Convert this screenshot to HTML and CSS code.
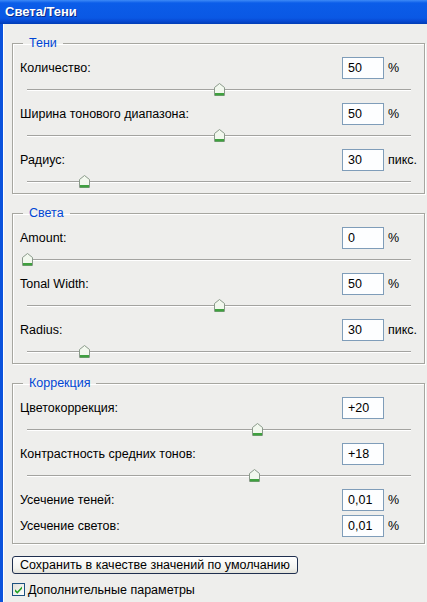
FILE: index.html
```html
<!DOCTYPE html>
<html lang="ru">
<head>
<meta charset="utf-8">
<title>Света/Тени</title>
<link rel="stylesheet" href="styles.css">
</head>
<body>
<div class="window">
  <div class="titlebar">Света/Тени</div>
  <div class="client">
    <fieldset class="group">
      <legend>Тени</legend>
      <div class="row"><span class="label">Количество:</span><span class="field">50</span><span class="unit">%</span></div>
      <div class="slider"><div class="track"></div><svg class="thumb" style="left:50%" width="11" height="13" viewBox="0 0 11 13"><path d="M0.5 4.5 L5.5 0.5 L10.5 4.5 V12.5 H0.5 Z" fill="#f2f8ee" stroke="#8a9a8a"/><rect x="1" y="10" width="9" height="2.5" fill="#3fa03f"/></svg></div>
      <div class="row"><span class="label">Ширина тонового диапазона:</span><span class="field">50</span><span class="unit">%</span></div>
      <div class="slider"><div class="track"></div><svg class="thumb" style="left:50%" width="11" height="13" viewBox="0 0 11 13"><path d="M0.5 4.5 L5.5 0.5 L10.5 4.5 V12.5 H0.5 Z" fill="#f2f8ee" stroke="#8a9a8a"/><rect x="1" y="10" width="9" height="2.5" fill="#3fa03f"/></svg></div>
      <div class="row"><span class="label">Радиус:</span><span class="field">30</span><span class="unit">пикс.</span></div>
      <div class="slider"><div class="track"></div><svg class="thumb" style="left:14.8%" width="11" height="13" viewBox="0 0 11 13"><path d="M0.5 4.5 L5.5 0.5 L10.5 4.5 V12.5 H0.5 Z" fill="#f2f8ee" stroke="#8a9a8a"/><rect x="1" y="10" width="9" height="2.5" fill="#3fa03f"/></svg></div>
    </fieldset>

    <fieldset class="group">
      <legend>Света</legend>
      <div class="row"><span class="label">Amount:</span><span class="field">0</span><span class="unit">%</span></div>
      <div class="slider"><div class="track"></div><svg class="thumb" style="left:0%" width="11" height="13" viewBox="0 0 11 13"><path d="M0.5 4.5 L5.5 0.5 L10.5 4.5 V12.5 H0.5 Z" fill="#f2f8ee" stroke="#8a9a8a"/><rect x="1" y="10" width="9" height="2.5" fill="#3fa03f"/></svg></div>
      <div class="row"><span class="label">Tonal Width:</span><span class="field">50</span><span class="unit">%</span></div>
      <div class="slider"><div class="track"></div><svg class="thumb" style="left:50%" width="11" height="13" viewBox="0 0 11 13"><path d="M0.5 4.5 L5.5 0.5 L10.5 4.5 V12.5 H0.5 Z" fill="#f2f8ee" stroke="#8a9a8a"/><rect x="1" y="10" width="9" height="2.5" fill="#3fa03f"/></svg></div>
      <div class="row"><span class="label">Radius:</span><span class="field">30</span><span class="unit">пикс.</span></div>
      <div class="slider"><div class="track"></div><svg class="thumb" style="left:14.8%" width="11" height="13" viewBox="0 0 11 13"><path d="M0.5 4.5 L5.5 0.5 L10.5 4.5 V12.5 H0.5 Z" fill="#f2f8ee" stroke="#8a9a8a"/><rect x="1" y="10" width="9" height="2.5" fill="#3fa03f"/></svg></div>
    </fieldset>

    <fieldset class="group">
      <legend>Коррекция</legend>
      <div class="row"><span class="label">Цветокоррекция:</span><span class="field">+20</span><span class="unit"></span></div>
      <div class="slider"><div class="track"></div><svg class="thumb" style="left:60%" width="11" height="13" viewBox="0 0 11 13"><path d="M0.5 4.5 L5.5 0.5 L10.5 4.5 V12.5 H0.5 Z" fill="#f2f8ee" stroke="#8a9a8a"/><rect x="1" y="10" width="9" height="2.5" fill="#3fa03f"/></svg></div>
      <div class="row"><span class="label">Контрастность средних тонов:</span><span class="field">+18</span><span class="unit"></span></div>
      <div class="slider"><div class="track"></div><svg class="thumb" style="left:59%" width="11" height="13" viewBox="0 0 11 13"><path d="M0.5 4.5 L5.5 0.5 L10.5 4.5 V12.5 H0.5 Z" fill="#f2f8ee" stroke="#8a9a8a"/><rect x="1" y="10" width="9" height="2.5" fill="#3fa03f"/></svg></div>
      <div class="row"><span class="label">Усечение теней:</span><span class="field">0,01</span><span class="unit">%</span></div>
      <div class="row row-tight"><span class="label">Усечение светов:</span><span class="field">0,01</span><span class="unit">%</span></div>
    </fieldset>

    <div class="button">Сохранить в качестве значений по умолчанию</div>
    <div class="check-row">
      <span class="checkbox"><svg width="11" height="11" viewBox="0 0 11 11"><path d="M2 5.2 L4.3 7.6 L9 2.6 L9 4.8 L4.3 9.8 L2 7.4 Z" fill="#21a121"/></svg></span>
      <span class="check-label">Дополнительные параметры</span>
    </div>
  </div>
</div>
</body>
</html>
```

FILE: styles.css
```css
html, body {
  margin: 0;
  padding: 0;
}
body {
  width: 427px;
  height: 602px;
  overflow: hidden;
  background: #eeeeec;
  font-family: "Liberation Sans", Arial, sans-serif;
  font-size: 12.5px;
  color: #000;
}
.window {
  height: 602px;
  display: flex;
  flex-direction: column;
}
.titlebar {
  height: 24px;
  line-height: 24px;
  padding-left: 5px;
  color: #fff;
  font-weight: bold;
  font-size: 13px;
  text-shadow: 1px 1px 0 #0a2a8a;
  background: linear-gradient(to bottom, #3d8af7 0px, #0b5de9 3px, #0a58e4 18px, #0749d3 21px, #003cb5 24px);
}
.client {
  flex: 1;
  border-left: 3px solid #0b52dc;
  padding: 11px 0 0 9px;
  box-shadow: inset 1px 0 0 #ffffff;
}
.group {
  margin: 0 2px 11px 0;
  padding: 0 0 0 7px;
  border: 1px solid #a6a6a0;
  box-shadow: 1px 1px 0 #fff, inset 1px 1px 0 #fff;
  min-inline-size: 0;
}
.group:last-of-type {
  padding-bottom: 6px;
}
.group legend {
  margin-left: 3px;
  padding: 0 6px;
  line-height: 16px;
  height: 16px;
  color: #0046d5;
}
.group legend + .row {
  margin-top: 6px;
}
.row {
  display: flex;
  align-items: center;
  height: 22px;
  margin-top: 2px;
}
.row-tight {
  margin-top: 4px;
}
.label {
  flex: 1;
}
.field {
  box-sizing: border-box;
  width: 42px;
  height: 22px;
  line-height: 20px;
  padding-left: 5px;
  border: 1px solid #7f9db9;
  background: #fdfeff;
}
.unit {
  width: 36px;
  margin-left: 4px;
}
.slider {
  position: relative;
  height: 22px;
  margin: 0 13px 0 7px;
}
.track {
  position: relative;
  top: 10px;
  height: 1px;
  background: #a3a3a0;
  border-bottom: 1px solid #fff;
}
.thumb {
  position: absolute;
  top: 4px;
  margin-left: -5px;
}
.button {
  box-sizing: border-box;
  width: 286px;
  height: 18px;
  line-height: 16px;
  margin-top: 12px;
  padding-left: 7px;
  border: 1px solid #1f2f4f;
  border-radius: 3px;
  background: linear-gradient(to bottom, #ffffff, #f3f3ef 70%, #e2e2da);
  white-space: nowrap;
}
.check-row {
  display: flex;
  align-items: center;
  gap: 3px;
  margin-top: 8px;
  height: 15px;
}
.checkbox {
  box-sizing: border-box;
  width: 13px;
  height: 13px;
  border: 1px solid #1c5180;
  background: linear-gradient(135deg, #e0e0d8, #fff);
  display: flex;
  align-items: center;
  justify-content: center;
}
.checkbox svg {
  display: block;
}
```
